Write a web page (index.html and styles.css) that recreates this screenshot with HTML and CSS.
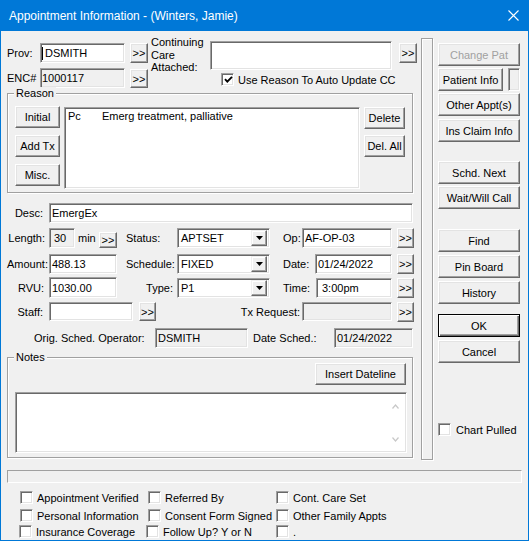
FILE: index.html
```html
<!DOCTYPE html>
<html>
<head>
<meta charset="utf-8">
<link rel="stylesheet" href="styles.css">
</head>
<body>
<div class="window">
  <div class="titlebar">
    <span class="title">Appointment Information - (Winters, Jamie)</span>
    <svg class="close" width="11" height="11" viewBox="0 0 11 11"><path d="M0.5 0.5 L10.5 10.5 M10.5 0.5 L0.5 10.5" stroke="#fff" stroke-width="1.1" fill="none"/></svg>
  </div>
  <div class="client">
    <div class="upper">
      <div class="main">
        <div class="top">
          <div class="idcol">
            <div class="r">
              <span class="lbl w33">Prov:</span>
              <div class="field w85 h20 prov"><span class="caret"></span>DSMITH</div>
              <button class="btn sm ml5">&gt;&gt;</button>
            </div>
            <div class="r mt5">
              <span class="lbl w33">ENC#</span>
              <div class="field dis w85 h20 enc">1000117</div>
              <button class="btn sm ml5 nudge">&gt;&gt;</button>
            </div>
          </div>
          <div class="cclabel">Continuing<br>Care<br>Attached:</div>
          <div class="ccbox">
            <div class="field cc"></div>
            <div class="chkrow usereason">
              <span class="cb"><svg width="9" height="9" viewBox="0 0 9 9"><path d="M1 4.2 L3.3 6.6 L8 1.8" stroke="#000" stroke-width="1.9" fill="none"/></svg></span>
              <span class="cbt">Use Reason To Auto Update CC</span>
            </div>
          </div>
          <button class="btn sm ccbtn">&gt;&gt;</button>
        </div>

        <div class="group reason">
          <span class="legend">Reason</span>
          <div class="reasonin">
            <div class="btncol w45">
              <button class="btn h22">Initial</button>
              <button class="btn h22 mt7">Add Tx</button>
              <button class="btn h22 mt7">Misc.</button>
            </div>
            <div class="field list">
              <div class="lrow"><span class="code">Pc</span><span>Emerg treatment, palliative</span></div>
            </div>
            <div class="btncol w41 mt1">
              <button class="btn h22">Delete</button>
              <button class="btn h22 mt6">Del. All</button>
            </div>
          </div>
        </div>

        <div class="frow r-desc">
          <span class="flbl pr4">Desc:</span>
          <div class="field h20 w364">EmergEx</div>
        </div>

        <div class="frow r-len">
          <span class="flbl pr1">Length:</span>
          <div class="field dis h20 w26 len">30</div>
          <span class="min">min</span>
          <button class="btn sm2">&gt;&gt;</button>
          <span class="mlbl">Status:</span>
          <div class="field combo"><span class="ctext">APTSET</span><span class="dd"><svg width="7" height="4" viewBox="0 0 7 4"><path d="M0 0 H7 L3.5 4 Z" fill="#000"/></svg></span></div>
          <span class="rlbl w19">Op:</span>
          <div class="field h20 w90">AF-OP-03</div>
          <button class="btn sm3">&gt;&gt;</button>
        </div>

        <div class="frow r-amt">
          <span class="flbl">Amount:</span>
          <div class="field h20 w68">488.13</div>
          <span class="mlbl">Schedule:</span>
          <div class="field combo"><span class="ctext">FIXED</span><span class="dd"><svg width="7" height="4" viewBox="0 0 7 4"><path d="M0 0 H7 L3.5 4 Z" fill="#000"/></svg></span></div>
          <span class="rlbl w32">Date:</span>
          <div class="field h20 w77">01/24/2022</div>
          <button class="btn sm3">&gt;&gt;</button>
        </div>

        <div class="frow r-rvu">
          <span class="flbl pr3">RVU:</span>
          <div class="field h21 w68">1030.00</div>
          <span class="mlbl right">Type:</span>
          <div class="field combo"><span class="ctext">P1</span><span class="dd"><svg width="7" height="4" viewBox="0 0 7 4"><path d="M0 0 H7 L3.5 4 Z" fill="#000"/></svg></span></div>
          <span class="rlbl w33">Time:</span>
          <div class="field h20 w76 time">3:00pm</div>
          <button class="btn sm3">&gt;&gt;</button>
        </div>

        <div class="frow r-staff">
          <span class="flbl pr4">Staff:</span>
          <div class="field h19 w84"></div>
          <button class="btn sm4">&gt;&gt;</button>
          <span class="txlbl">Tx Request:</span>
          <div class="field dis h19 w90"></div>
          <button class="btn sm3">&gt;&gt;</button>
        </div>

        <div class="frow r-orig">
          <span class="olbl">Orig. Sched. Operator:</span>
          <div class="field dis h20 w93">DSMITH</div>
          <span class="dslbl">Date Sched.:</span>
          <div class="field dis h20 w79">01/24/2022</div>
        </div>

        <div class="group notes">
          <span class="legend">Notes</span>
          <div class="notesbar"><button class="btn ins">Insert Dateline</button></div>
          <div class="field notesbox">
            <div class="nscroll">
              <svg width="7" height="5" viewBox="0 0 7 5"><path d="M0.5 4.5 L3.5 1 L6.5 4.5" stroke="#c8c8c8" stroke-width="1.2" fill="none"/></svg>
              <svg width="7" height="5" viewBox="0 0 7 5"><path d="M0.5 0.5 L3.5 4 L6.5 0.5" stroke="#c8c8c8" stroke-width="1.2" fill="none"/></svg>
            </div>
          </div>
        </div>
      </div>

      <div class="divider"></div>

      <div class="side">
        <button class="btn sbtn dis-t s1">Change Pat</button>
        <div class="prow">
          <button class="btn sbtn pinfo">Patient Info</button>
          <div class="field pbox"></div>
        </div>
        <button class="btn sbtn s2">Other Appt(s)</button>
        <button class="btn sbtn s3">Ins Claim Info</button>
        <button class="btn sbtn s4">Schd. Next</button>
        <button class="btn sbtn s2">Wait/Will Call</button>
        <button class="btn sbtn s5">Find</button>
        <button class="btn sbtn s3">Pin Board</button>
        <button class="btn sbtn s3">History</button>
        <button class="btn sbtn ok">OK</button>
        <button class="btn sbtn s3">Cancel</button>
        <div class="chkrow chart"><span class="cb"></span><span class="cbt">Chart Pulled</span></div>
      </div>
    </div>

    <div class="statusbar"></div>

    <div class="checks">
      <div class="crow">
        <div class="chkrow c1"><span class="cb"></span><span class="cbt">Appointment Verified</span></div>
        <div class="chkrow c2"><span class="cb"></span><span class="cbt">Referred By</span></div>
        <div class="chkrow"><span class="cb"></span><span class="cbt">Cont. Care Set</span></div>
      </div>
      <div class="crow mt5">
        <div class="chkrow c1"><span class="cb"></span><span class="cbt">Personal Information</span></div>
        <div class="chkrow c2"><span class="cb"></span><span class="cbt">Consent Form Signed</span></div>
        <div class="chkrow"><span class="cb"></span><span class="cbt">Other Family Appts</span></div>
      </div>
      <div class="crow mt3 shift">
        <div class="chkrow c1b"><span class="cb"></span><span class="cbt">Insurance Coverage</span></div>
        <div class="chkrow c2b"><span class="cb"></span><span class="cbt">Follow Up? Y or N</span></div>
        <div class="chkrow"><span class="cb"></span><span class="cbt">.</span></div>
      </div>
    </div>
  </div>
</div>
</body>
</html>
```

FILE: styles.css
```css
* { box-sizing: border-box; }
html, body { margin: 0; padding: 0; background: #fff; }
body { font-family: "Liberation Sans", Arial, sans-serif; font-size: 11px; color: #000; }

.window {
  width: 529px; height: 541px;
  border: 1px solid #0078d7;
  background: #f0f0f0;
  overflow: hidden;
}
.titlebar {
  height: 30px; background: #0078d7; color: #fff;
  display: flex; align-items: center; justify-content: space-between;
  padding: 0 9px 0 8px;
}
.title { font-size: 12px; line-height: 14px; margin-top: -1px; }
.close { display: block; margin-top: -1px; }

.client { display: flex; flex-direction: column; }
.upper { display: flex; height: 431px; }
.main { width: 406px; margin-left: 6px; padding-top: 5px; flex-shrink: 0; }

/* generic controls */
.btn {
  font-family: inherit; font-size: 11px; color: #000;
  background: #f0f0f0;
  border: 1px solid; border-color: #fff #696969 #696969 #fff;
  box-shadow: inset -1px -1px 0 #a0a0a0, inset 1px 1px 0 #e3e3e3;
  padding: 0; margin: 0;
  display: flex; align-items: center; justify-content: center;
  flex-shrink: 0; line-height: 12px;
}
.field {
  background: #fff;
  border: 1px solid; border-color: #a0a0a0 #fff #fff #a0a0a0;
  box-shadow: inset 1px 1px 0 #696969, inset -1px -1px 0 #e3e3e3;
  display: flex; align-items: center;
  padding: 0 0 0 2px; flex-shrink: 0;
  white-space: nowrap;
}
.field.dis { background: #f0f0f0; }

.cb {
  width: 13px; height: 13px; flex-shrink: 0;
  background: #fff;
  border: 1px solid; border-color: #a0a0a0 #fff #fff #a0a0a0;
  box-shadow: inset 1px 1px 0 #696969, inset -1px -1px 0 #e3e3e3;
  display: flex; align-items: center; justify-content: center;
}
.cb svg { display: block; margin: 0 0 0 1px; }
.chkrow { display: flex; align-items: center; height: 13px; }
.cbt { margin-left: 4px; white-space: nowrap; }

.w33 { width: 33px; } .w85 { width: 85px; } .w45 { width: 45px; } .w41 { width: 41px; }
.w364 { width: 364px; } .w26 { width: 26px; } .w90 { width: 90px; } .w68 { width: 68px; }
.w77 { width: 77px; } .w76 { width: 76px; } .w84 { width: 84px; } .w93 { width: 93px; } .w79 { width: 79px; }
.w19 { width: 19px; } .w32 { width: 32px; }
.h19 { height: 19px; } .h20 { height: 20px; } .h21 { height: 21px; } .h22 { height: 22px; }
.ml5 { margin-left: 5px; }
.mt1 { margin-top: 1px; } .mt3 { margin-top: 3px; } .mt5 { margin-top: 5px; } .mt6 { margin-top: 6px; } .mt7 { margin-top: 7px; }

/* top block */
.top { display: flex; align-items: flex-start; height: 57px; }
.idcol { width: 141px; padding-top: 7px; flex-shrink: 0; }
.r { display: flex; align-items: center; }
.lbl { flex-shrink: 0; }
.btn.sm { width: 18px; height: 20px; }
.btn.nudge { margin-top: 1px; height: 19px; }
.prov { padding-left: 1px; }
.caret { width: 1px; height: 13px; background: #000; margin-right: 2px; }
.enc { padding-left: 1px; }
.cclabel { margin-left: 3px; width: 59px; line-height: 12.5px; flex-shrink: 0; padding-top: 0; }
.ccbox { width: 182px; margin-top: 5px; flex-shrink: 0; }
.field.cc { width: 182px; height: 29px; }
.usereason { margin-top: 3px; margin-left: 11px; }
.ccbtn { margin-left: 7px; margin-top: 7px; }

/* group boxes */
.group {
  position: relative;
  border: 1px solid #a0a0a0;
  box-shadow: inset 1px 1px 0 #fff, 1px 1px 0 #fff;
}
.legend {
  position: absolute; top: -7px; left: 6px;
  padding: 0 2px; background: #f0f0f0; line-height: 12px;
}
.reason { height: 100px; }
.reasonin { display: flex; align-items: flex-start; padding: 12px 0 0 7px; }
.btncol { display: flex; flex-direction: column; flex-shrink: 0; }
.btncol .btn { width: 100%; }
.field.list {
  width: 296px; height: 82px; margin: 1px 4px 0 4px;
  align-items: flex-start; padding: 2px 0 0 3px;
}
.lrow { display: flex; line-height: 13px; }
.code { width: 34px; }

/* form rows */
.frow { display: flex; align-items: center; }
.flbl { width: 42px; text-align: right; flex-shrink: 0; padding-right: 3px; }
.flbl.pr4 { padding-right: 6px; }
.flbl.pr3 { padding-right: 5px; }
.flbl.pr1 { padding-right: 4px; }
.r-desc { margin-top: 10px; }
.r-len { margin-top: 5px; height: 20px; }
.r-amt { margin-top: 6px; height: 20px; }
.r-rvu { margin-top: 3px; height: 21px; }
.r-staff { margin-top: 4px; height: 19px; }
.r-orig { margin-top: 7px; height: 20px; }
.len { padding-left: 4px; }
.min { width: 21px; margin-left: 3px; flex-shrink: 0; }
.btn.sm2 { width: 18px; height: 16px; margin-top: 4px; }
.mlbl { width: 51px; margin-left: 9px; flex-shrink: 0; }
.mlbl.right { text-align: right; padding-right: 4px; }
.combo { width: 93px; height: 20px; padding: 0 2px 0 3px; justify-content: space-between; }
.dd {
  width: 16px; height: 16px;
  background: #f0f0f0;
  border: 1px solid; border-color: #f0f0f0 #696969 #696969 #f0f0f0;
  box-shadow: inset -1px -1px 0 #a0a0a0, inset 1px 1px 0 #fff;
  display: flex; align-items: center; justify-content: center;
}
.dd svg { display: block; }
.rlbl { margin-left: 13px; flex-shrink: 0; }
.btn.sm3 { width: 17px; height: 20px; margin-left: 5px; }
.time { padding-left: 5px; }
.btn.sm4 { width: 17px; height: 19px; margin-left: 6px; }
.txlbl { width: 144px; text-align: right; flex-shrink: 0; padding-right: 0; margin-right: 2px; }
.olbl { margin-left: 27px; width: 121px; flex-shrink: 0; }
.dslbl { margin-left: 5px; width: 81px; flex-shrink: 0; }

.notes { margin-top: 9px; height: 101px; }
.notesbar { display: flex; justify-content: flex-end; padding: 5px 6px 0 0; }
.btn.ins { width: 91px; height: 22px; }
.field.notesbox {
  width: 392px; height: 61px; margin: 7px 0 0 7px;
  justify-content: flex-end; align-items: stretch; padding: 0;
}
.nscroll {
  width: 17px; display: flex; flex-direction: column; justify-content: space-between;
  align-items: center; padding: 9px 0 8px 0; margin: 2px 2px 2px 0; background: #fff;
}
.nscroll svg { display: block; }

/* divider + side */
.divider {
  width: 12px; height: 422px; margin: 7px 0 0 8px; flex-shrink: 0;
  border: 1px solid #a0a0a0;
  box-shadow: inset 1px 1px 0 #fff, 1px 1px 0 #fff;
}
.side { width: 83px; margin-left: 5px; display: flex; flex-direction: column; flex-shrink: 0; }
.btn.sbtn { width: 82px; height: 23px; }
.s1 { margin-top: 12px; }
.dis-t { color: #a0a0a0; }
.prow { display: flex; margin-top: 2px; height: 23px; }
.btn.pinfo { width: 65px; }
.field.pbox { width: 12px; height: 23px; margin-left: 5px; background: #f0f0f0; }
.s2 { margin-top: 2px; }
.s3 { margin-top: 3px; }
.s4 { margin-top: 19px; }
.s5 { margin-top: 20px; }
.btn.ok {
  margin-top: 10px;
  border-color: #000;
  box-shadow: inset 1px 1px 0 #fff, inset -1px -1px 0 #696969, inset -2px -2px 0 #a0a0a0;
}
.chart { margin-top: 60px; }
.chart .cbt { margin-left: 5px; }

/* bottom */
.statusbar {
  margin: 8px 0 0 6px; width: 515px; height: 13px;
  border: 1px solid; border-color: #a0a0a0 #fff #fff #a0a0a0;
}
.checks { margin-top: 8px; padding-left: 19px; }
.crow { display: flex; }
.c1, .c2 { width: 128px; flex-shrink: 0; }
.crow.shift { margin-left: -1px; }
.c1b { width: 127px; flex-shrink: 0; }
.c2b { width: 130px; flex-shrink: 0; }
```
